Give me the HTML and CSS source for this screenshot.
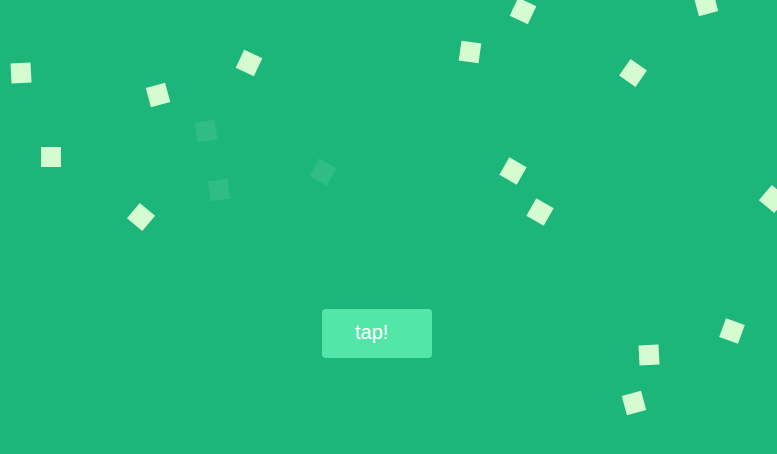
FILE: index.html
```html
<!DOCTYPE html>
<html>
<head>
<meta charset="utf-8">
<link rel="stylesheet" href="styles.css">
</head>
<body>
<main class="stage">
  <div class="confetti">
    <span class="bit" style="left:11px;top:63px;transform:rotate(-3deg)"></span>
    <span class="bit" style="left:148px;top:85px;transform:rotate(-15deg)"></span>
    <span class="bit" style="left:239px;top:53px;transform:rotate(25deg)"></span>
    <span class="bit faded" style="left:196px;top:121px;transform:rotate(-8deg)"></span>
    <span class="bit" style="left:41px;top:147px;transform:rotate(0deg)"></span>
    <span class="bit faded" style="left:209px;top:180px;transform:rotate(-8deg)"></span>
    <span class="bit" style="left:131px;top:207px;transform:rotate(40deg)"></span>
    <span class="bit faded" style="left:313px;top:162px;transform:rotate(30deg)"></span>
    <span class="bit" style="left:513px;top:1px;transform:rotate(25deg)"></span>
    <span class="bit" style="left:460px;top:42px;transform:rotate(8deg)"></span>
    <span class="bit" style="left:696px;top:-6px;transform:rotate(-15deg)"></span>
    <span class="bit" style="left:623px;top:63px;transform:rotate(35deg)"></span>
    <span class="bit" style="left:503px;top:161px;transform:rotate(30deg)"></span>
    <span class="bit" style="left:530px;top:202px;transform:rotate(30deg)"></span>
    <span class="bit" style="left:763px;top:189px;transform:rotate(40deg)"></span>
    <span class="bit" style="left:722px;top:321px;transform:rotate(20deg)"></span>
    <span class="bit" style="left:639px;top:345px;transform:rotate(-3deg)"></span>
    <span class="bit" style="left:624px;top:393px;transform:rotate(-15deg)"></span>
  </div>
  <button class="tap">tap!</button>
</main>
</body>
</html>
```
FILE: styles.css
```css
html, body {
  margin: 0;
  padding: 0;
  height: 100%;
  overflow: hidden;
  background: #1cb67b;
}
.stage {
  position: relative;
  height: 454px;
  box-sizing: border-box;
  padding: 309px 0 0 322px;
  display: flex;
  align-items: flex-start;
}
.confetti {
  position: absolute;
  inset: 0;
  pointer-events: none;
}
.bit {
  position: absolute;
  width: 20px;
  height: 20px;
  background: #d4fcd0;
}
.bit.faded {
  opacity: 0.1;
}
.tap {
  position: relative;
  width: 110px;
  height: 49px;
  box-sizing: border-box;
  padding: 0 0 3px 33px;
  text-align: left;
  border: none;
  border-radius: 4px;
  background: #52e6a9;
  color: #ffffff;
  font-family: "Liberation Sans", Arial, sans-serif;
  font-size: 20px;
}
```
